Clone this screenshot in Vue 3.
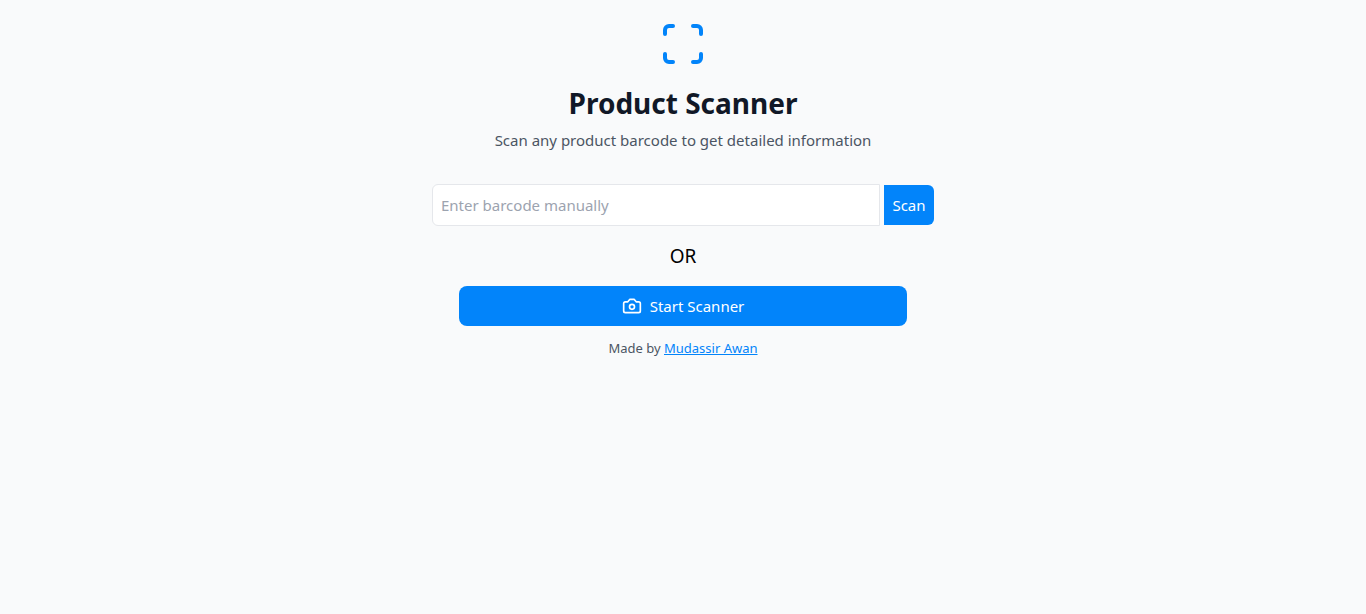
<script setup>
import { ref } from 'vue'

const barcode = ref('')
</script>

<template>
  <main class="page">
    <svg class="logo" viewBox="0 0 24 24" fill="none" stroke="currentColor" stroke-width="2" stroke-linecap="round" stroke-linejoin="round" aria-hidden="true">
      <path d="M3 7V5a2 2 0 0 1 2-2h2" />
      <path d="M17 3h2a2 2 0 0 1 2 2v2" />
      <path d="M21 17v2a2 2 0 0 1-2 2h-2" />
      <path d="M7 21H5a2 2 0 0 1-2-2v-2" />
    </svg>
    <h1 class="title">Product Scanner</h1>
    <p class="subtitle">Scan any product barcode to get detailed information</p>
    <form class="manual" @submit.prevent>
      <input v-model="barcode" class="field" type="text" aria-label="Enter barcode manually" placeholder="Enter barcode manually" />
      <button class="scan" type="submit">Scan</button>
    </form>
    <p class="or">OR</p>
    <button class="start" type="button">
      <svg class="camera" viewBox="0 0 24 24" fill="none" stroke="currentColor" stroke-width="2" stroke-linecap="round" stroke-linejoin="round" aria-hidden="true">
        <path d="M14.5 4h-5L7 7H4a2 2 0 0 0-2 2v9a2 2 0 0 0 2 2h16a2 2 0 0 0 2-2V9a2 2 0 0 0-2-2h-3l-2.500-3z" />
        <circle cx="12" cy="13" r="3" />
      </svg>
      <span>Start Scanner</span>
    </button>
    <footer class="credit">Made by <a class="author" href="#">Mudassir Awan</a></footer>
  </main>
</template>

<style>
body {
  background: #f9fafb;
}
</style>

<style scoped>
.page {
  box-sizing: border-box;
  min-height: 100vh;
  padding: 20px 16px;
  display: flex;
  flex-direction: column;
  align-items: center;
  background: #f9fafb;
  color: #000;
  font-family: "Noto Sans", "Open Sans", sans-serif;
  font-size: 15px;
  line-height: 24px;
}
.logo {
  width: 48px;
  height: 48px;
  color: #0284fa;
}
.title {
  margin: 16px 0 0;
  color: #111827;
  font-size: 28px;
  line-height: 38px;
  font-weight: 700;
}
.subtitle {
  margin: 6px 0 0;
  color: #4b5563;
}
.manual {
  margin-top: 32px;
  width: 100%;
  max-width: 502px;
  display: flex;
  align-items: center;
  gap: 4px;
}
.field {
  box-sizing: border-box;
  flex: 1;
  min-width: 0;
  padding: 8px;
  border: 1px solid #e5e7eb;
  border-radius: 6px 0 0 6px;
  background: #fff;
  color: #000;
  font: inherit;
}
.field::placeholder {
  color: #9ca3af;
  opacity: 1;
}
.scan,
.start {
  border: 0;
  background: #0284fa;
  color: #fff;
  font: inherit;
  cursor: pointer;
}
.scan {
  min-width: 50px;
  padding: 8px;
  border-radius: 0 6px 6px 0;
}
.or {
  margin: 16px 0;
  font-size: 19px;
  line-height: 28px;
}
.start {
  width: 100%;
  max-width: 448px;
  padding: 8px 16px;
  border-radius: 8px;
  display: flex;
  align-items: center;
  justify-content: center;
  gap: 8px;
}
.camera {
  width: 20px;
  height: 20px;
}
.credit {
  margin-top: 12px;
  color: #4b5563;
  font-size: 13px;
  line-height: 20px;
}
.author {
  color: #0284fa;
}
</style>
